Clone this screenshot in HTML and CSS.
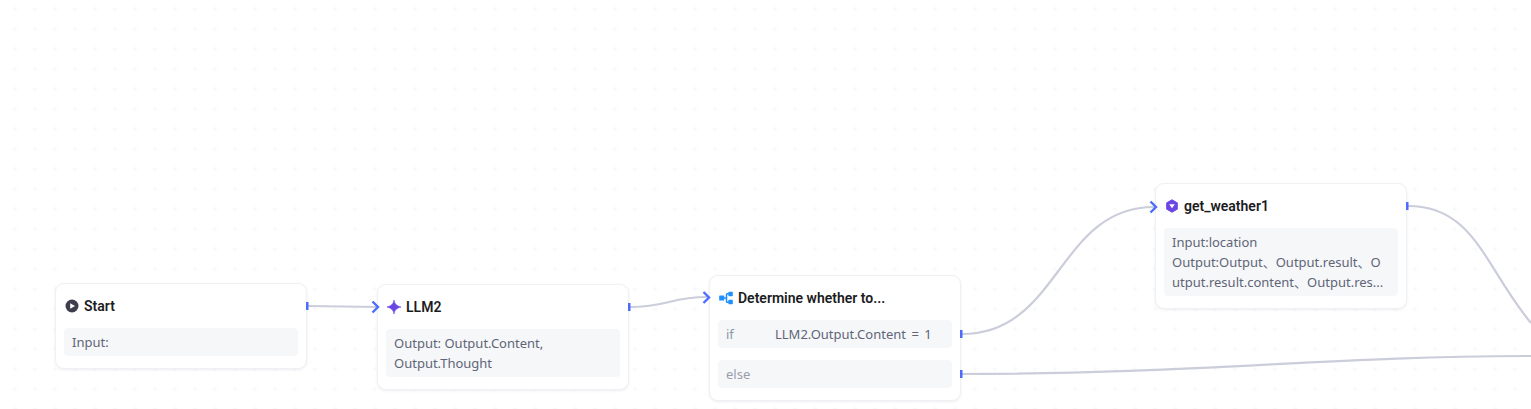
FILE: index.html
```html
<!DOCTYPE html>
<html lang="en">
<head>
<meta charset="utf-8">
<title>Workflow</title>
<link rel="stylesheet" href="styles.css">
</head>
<body>
<main class="canvas">
  <svg class="layer" width="1531" height="409" viewBox="0 0 1531 409">
    <defs>
      <pattern id="grid" x="5" y="-1" width="20" height="20" patternUnits="userSpaceOnUse">
        <path class="grid-plus" d="M10 7.500v5M7.500 10h5"/>
      </pattern>
    </defs>
    <rect width="1531" height="409" fill="url(#grid)"/>
    <path class="wire" d="M308 306C340 306 345 307 376 307"/>
    <path class="wire" d="M630 307C668 307 670 297 707 297"/>
    <path class="wire" d="M962 334C1060 334 1058 207 1154 207"/>
    <path class="wire" d="M962 374C1200 374 1330 356 1531 356"/>
    <path class="wire" d="M1408 206C1475 206 1485 268 1531 323"/>
  </svg>

  <article class="node node-start">
    <header class="node-head">
      <svg class="icon" viewBox="0 0 14 14"><circle cx="7" cy="7" r="6.500" fill="#3d3d4e"/><path d="M5.200 4.200L10 7L5.200 9.800Z" fill="#fff"/></svg>
      <h2 class="node-title">Start</h2>
    </header>
    <div class="node-body"><p class="box">Input:</p></div>
  </article>

  <article class="node node-llm">
    <header class="node-head">
      <svg class="icon" viewBox="0 0 14 14"><path d="M7 0C7.500 3.600 9.500 6 14 7C9.500 8 7.500 10.400 7 14C6.500 10.400 4.500 8 0 7C4.500 6 6.500 3.600 7 0Z" fill="#6b46e5" stroke="#6b46e5" stroke-width=".6" stroke-linejoin="round"/></svg>
      <h2 class="node-title">LLM2</h2>
    </header>
    <div class="node-body"><p class="box">Output: Output.Content,<br>Output.Thought</p></div>
  </article>

  <article class="node node-cond">
    <header class="node-head">
      <svg class="icon" viewBox="0 0 14 14"><rect x="0.200" y="4.500" width="5" height="5" rx="0.600" fill="#1f8fff"/><path d="M5 7H7.500M10 2.800H8.300Q7.500 2.800 7.500 3.600V10.400Q7.500 11.200 8.300 11.200H10" fill="none" stroke="#1f8fff" stroke-width="1.500"/><rect x="9.400" y="0.800" width="4.400" height="4.400" rx="0.600" fill="#1f8fff"/><rect x="9.400" y="8.800" width="4.400" height="4.400" rx="0.600" fill="#1f8fff"/></svg>
      <h2 class="node-title">Determine whether to...</h2>
    </header>
    <div class="node-body branches">
      <p class="box branch"><span class="branch-key">if</span><span>LLM2.Output.Content <span class="branch-op">=</span> 1</span></p>
      <p class="box branch"><span class="branch-else">else</span></p>
    </div>
  </article>

  <article class="node node-tool">
    <header class="node-head">
      <svg class="icon" viewBox="0 0 14 14"><path d="M7 .800L12.300 3.800V10.200L7 13.200L1.700 10.200V3.800Z" fill="#6b46e5" stroke="#6b46e5" stroke-linejoin="round"/><path d="M4.200 5.300H9.800L7 9.200Z" fill="#fff"/></svg>
      <h2 class="node-title">get_weather1</h2>
    </header>
    <div class="node-body"><p class="box wrap-all">Input:location<br>Output:Output、Output.result、Output.result.content、Output.res...</p></div>
  </article>

  <svg class="layer" width="1531" height="409" viewBox="0 0 1531 409">
    <path class="chev" d="M372.500 301.500L378 307L372.500 312.500"/>
    <path class="chev" d="M703.500 292L709 297.500L703.500 303"/>
    <path class="chev" d="M1150.500 201.500L1156 207L1150.500 212.500"/>
    <rect class="port" x="306" y="302" width="2.500" height="8"/>
    <rect class="port" x="628" y="303" width="2.500" height="8"/>
    <rect class="port" x="960" y="330" width="2.500" height="8"/>
    <rect class="port" x="960" y="370" width="2.500" height="8"/>
    <rect class="port" x="1406" y="202" width="2.500" height="8"/>
  </svg>
</main>
</body>
</html>
```
FILE: styles.css
```css
* { box-sizing: border-box; }
html, body { margin: 0; height: 100%; }
body {
  background: #fff;
  overflow: hidden;
  font-family: "Noto Sans", "Noto Sans CJK SC", sans-serif;
}
.canvas { position: relative; width: 1531px; height: 409px; overflow: hidden; }
.layer { position: absolute; left: 0; top: 0; }
.grid-plus { stroke: #f5f7fa; stroke-width: 1; fill: none; }
.wire { fill: none; stroke: #cbcdda; stroke-width: 2.200; }
.chev { fill: none; stroke: #4d6bfe; stroke-width: 2.400; }
.port { fill: #4d6bfe; }

.node {
  position: absolute;
  width: 252px;
  padding: 0 8px 12px;
  background: #fff;
  border: 1px solid #f0f1f4;
  border-radius: 9px;
  box-shadow: 0 1px 3px rgba(30, 40, 70, .08);
}
.node-start { left: 55px; top: 283px; height: 86px; }
.node-llm { left: 377px; top: 284px; height: 106px; }
.node-cond { left: 709px; top: 275px; height: 126px; }
.node-tool { left: 1155px; top: 183px; height: 126px; }

.node-head { display: flex; align-items: center; gap: 5px; height: 44px; padding-left: 1px; }
.icon { width: 14px; height: 14px; flex: none; display: block; }
.node-title {
  margin: 0;
  font-family: Roboto, "Noto Sans", sans-serif;
  font-size: 14px;
  line-height: 20px;
  font-weight: 600;
  color: #1b1c22;
}
.branches { display: flex; flex-direction: column; gap: 12px; }
.box {
  margin: 0;
  padding: 4px 8px;
  background: #f6f7f9;
  border-radius: 4px;
  font-size: 13px;
  line-height: 20px;
  color: #5f6577;
}
.branch { display: flex; height: 28px; }
.branch-key { width: 49px; color: #8899aa; }
.branch-op { margin: 0 2px; }
.branch-else { color: #9a9ea9; }
.wrap-all { padding-right: 13px; word-break: break-all; }
```
